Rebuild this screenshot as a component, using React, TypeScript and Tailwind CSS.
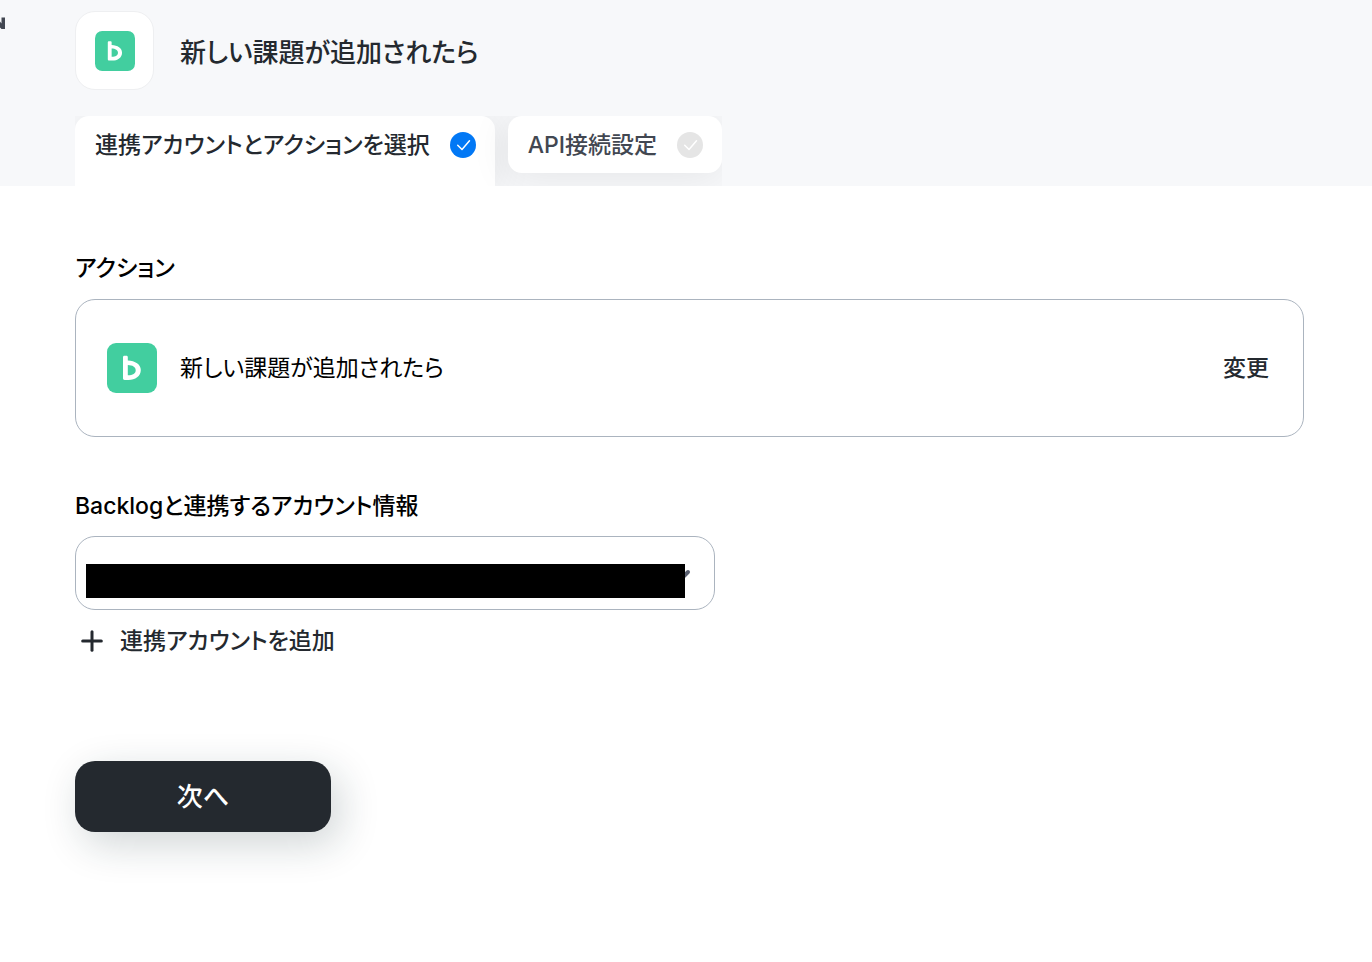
import { ChevronDown, Plus } from "lucide-react"
import clsx from "clsx"

function BacklogLogo({ className }: { className?: string }) {
  return (
    <svg viewBox="0 0 50 50" className={className} aria-label="Backlog" role="img">
      <rect width="50" height="50" rx="9" fill="#42ce9f" />
      <path
        d="M16 14.200c0-1 .6-1.500 1.400-1.500h2c.9 0 1.400.5 1.400 1.500v3.200c7.400.3 13 3.800 13 9.700 0 6.300-5.600 9.900-12.300 9.900h-3.800c-1.100 0-1.700-.6-1.700-1.700zM20.800 22v10.300c4.700.1 7.900-1.700 7.900-5.100 0-3.300-3.200-5-7.900-5.200z"
        fill="#fff"
        fillRule="evenodd"
      />
    </svg>
  )
}

function StepMark({ done }: { done: boolean }) {
  return (
    <svg
      viewBox="0 0 26 26"
      className={clsx("size-[26px] shrink-0", done ? "text-[#0278f5]" : "text-[#e5e5e5]")}
      aria-hidden="true"
    >
      <circle cx="13" cy="13" r="13" fill="currentColor" />
      <path
        d="M7.700 13.200l4.300 4.300 7.500-8.700"
        fill="none"
        stroke="#fff"
        strokeWidth="1.500"
        strokeLinecap="round"
        strokeLinejoin="round"
      />
    </svg>
  )
}

function Header() {
  return (
    <header className="relative bg-[#f7f8fa] pt-[11px] pl-[75px]">
      <svg className="absolute top-4 left-0 h-4 w-2" viewBox="0 0 8 16" aria-hidden="true">
        <path d="M0 5.500 1.500 7.500V1.500H5V13H1.500L0 11.500z" fill="#424751" />
      </svg>
      <div className="flex items-center gap-[26px]">
        <div className="flex size-[79px] items-center justify-center rounded-[20px] border border-[#eeeff1] bg-white">
          <BacklogLogo className="size-10" />
        </div>
        <h1 className="pt-1 text-[26px] leading-10 font-medium text-[#24292f]">新しい課題が追加されたら</h1>
      </div>
      <nav className="mt-[26px] flex h-[70px] w-fit items-start gap-[13px] overflow-hidden">
        <button
          type="button"
          className="flex h-[70px] items-start gap-5 rounded-t-[14px] bg-white pt-4 pr-[19px] pl-5 text-[23px] leading-[26px] font-medium text-[#24292f] shadow-[0_4px_40px_rgba(0,0,0,0.08)]"
        >
          連携アカウントとアクションを選択
          <StepMark done />
        </button>
        <button
          type="button"
          className="flex h-[57px] items-center gap-5 rounded-[14px] bg-white pr-[19px] pl-5 text-[23px] leading-[26px] font-medium text-[#424751] shadow-[0_4px_40px_rgba(0,0,0,0.08)]"
        >
          API接続設定
          <StepMark done={false} />
        </button>
      </nav>
    </header>
  )
}

export default function App() {
  return (
    <div className="min-h-screen bg-white font-['Inter','Noto_Sans_CJK_JP',sans-serif] [font-feature-settings:'palt']">
      <Header />
      <main className="flex flex-col items-start pt-16 pr-[68px] pb-[130px] pl-[75px]">
        <h2 className="text-[23px] leading-9 font-medium text-black">アクション</h2>
        <section className="mt-[13px] flex h-[138px] w-full items-center rounded-[20px] border border-[#abb4bf] pr-[34px] pl-[31px]">
          <BacklogLogo className="size-[50px]" />
          <p className="ml-[23px] flex-1 text-[23px] leading-9 text-black">新しい課題が追加されたら</p>
          <button type="button" className="text-[23px] leading-9 font-medium text-[#24292f]">
            変更
          </button>
        </section>

        <label htmlFor="account" className="mt-[51px] text-[23px] leading-9 font-medium text-black">
          Backlogと連携するアカウント情報
        </label>
        <div className="relative mt-3 w-full max-w-[640px]">
          <select
            id="account"
            className="h-[74px] w-full appearance-none rounded-[20px] border border-[#abb4bf] bg-white px-5 text-[23px]"
          >
            <option value=""></option>
          </select>
          <ChevronDown
            className="pointer-events-none absolute top-[27px] right-[21px] size-6 text-[#5a6070]"
            strokeWidth={4}
          />
          <span className="pointer-events-none absolute top-7 right-[30px] left-[11px] h-[34px] bg-black" />
        </div>
        <button
          type="button"
          className="mt-[13px] flex items-center gap-3 pl-px text-[23px] leading-9 font-medium text-[#24292f]"
        >
          <Plus className="size-8" strokeWidth={2.25} />
          連携アカウントを追加
        </button>

        <button
          type="button"
          className="mt-[102px] h-[71px] w-64 rounded-[20px] bg-[#24292f] text-[26px] font-medium text-white shadow-[8px_12px_40px_rgba(22,44,50,0.2)]"
        >
          次へ
        </button>
      </main>
    </div>
  )
}
